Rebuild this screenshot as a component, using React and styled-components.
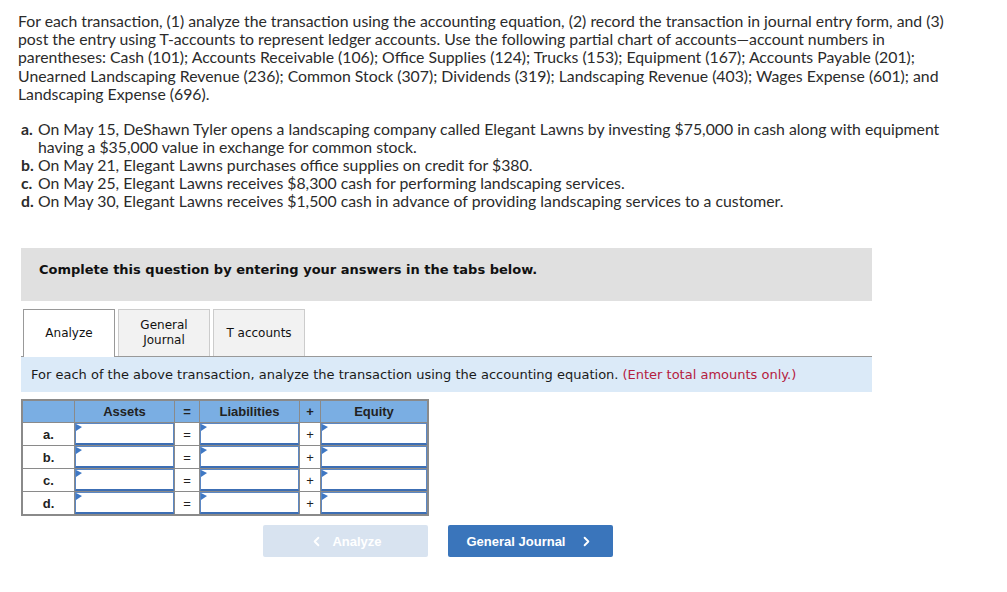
import styled, { createGlobalStyle } from 'styled-components';
import { ChevronLeft, ChevronRight } from 'lucide-react';

const GlobalStyle = createGlobalStyle`
  body {
    margin: 0;
    background: #fff;
  }
`;

const Page = styled.div`
  padding: 12px 18px 30px 18px;
  color: #2b2b2b;
`;

const Intro = styled.p`
  margin: 0;
  max-width: 935px;
  font-family: Lato, 'Open Sans', sans-serif;
  font-size: 15.8px;
  line-height: 18.2px;
`;

const Items = styled.div`
  margin: 17px 0 0 3px;
  display: flex;
  flex-direction: column;
  font-family: Lato, 'Open Sans', sans-serif;
  font-size: 15.8px;
  line-height: 18px;
`;

const Item = styled.div`
  display: grid;
  grid-template-columns: 17px 1fr;
  max-width: 940px;
`;

const Letter = styled.b`
  font-weight: 700;
`;

const Panel = styled.div`
  margin: 38px 0 0 3px;
  width: 851px;
  font-family: 'DejaVu Sans', Verdana, sans-serif;
`;

const Notice = styled.div`
  height: 53px;
  box-sizing: border-box;
  background: #e0e0e0;
  padding: 14px 0 0 18px;
  font-size: 13px;
  line-height: 16px;
  font-weight: 700;
  color: #111;
`;

const TabRow = styled.div`
  margin-top: 8px;
  display: flex;
  gap: 3px;
  padding-left: 2px;
  border-bottom: 1px solid #999;
`;

const Tab = styled.div`
  width: 92px;
  box-sizing: border-box;
  display: flex;
  align-items: center;
  justify-content: center;
  text-align: center;
  font-size: 12px;
  line-height: 15px;
  color: #111;
  background: ${({ active }) => (active ? '#fff' : '#f2f2f2')};
  border: 1px solid ${({ active }) => (active ? '#999' : '#ccc')};
  border-bottom: none;
  margin-bottom: ${({ active }) => (active ? '-1px' : '0')};
  height: ${({ active }) => (active ? '48px' : '47px')};
`;

const Info = styled.div`
  height: 35px;
  background: #dbeaf8;
  display: flex;
  align-items: center;
  padding-left: 10px;
  font-size: 13px;
  color: #1a1a1a;
  white-space: nowrap;
`;

const Hint = styled.span`
  color: #b5203f;
  margin-left: 4px;
`;

const Table = styled.table`
  margin-top: 7px;
  border-collapse: collapse;
  border: 2px solid #8a8a8a;
  font-family: 'Liberation Sans', Arial, sans-serif;
  font-size: 13px;
  font-weight: 700;
  color: #222;
`;

const Head = styled.th`
  height: 21px;
  padding: 0;
  background: #7aaee3;
  border: 1px solid #8a8a8a;
  width: ${({ w }) => w}px;
  font-weight: 700;
  text-align: center;
`;

const Cell = styled.td`
  height: 22px;
  padding: 0;
  border: 1px solid #8a8a8a;
  text-align: center;
  font-weight: ${({ light }) => (light ? 400 : 700)};
  position: relative;
`;

const Field = styled.input`
  display: block;
  width: 100%;
  height: 22px;
  box-sizing: border-box;
  margin: 0;
  border: 1px solid #5b87c4;
  border-bottom: 2px solid #3c6eb4;
  background: #fff;
  outline: none;
`;

const Flag = styled.span`
  position: absolute;
  top: 1px;
  left: 1px;
  width: 0;
  height: 0;
  border-left: 6px solid #3f78c4;
  border-top: 3px solid transparent;
  border-bottom: 4px solid transparent;
`;

const Nav = styled.div`
  margin-top: 9px;
  padding-left: 242px;
  display: flex;
  gap: 20px;
`;

const NavButton = styled.button`
  width: 165px;
  height: 32px;
  border: none;
  border-radius: 2px;
  display: flex;
  align-items: center;
  justify-content: center;
  gap: ${({ back }) => (back ? '8px' : '14px')};
  background: ${({ disabled }) => (disabled ? '#d8e3f0' : '#3a75bb')};
  color: #fff;
  font-family: 'Liberation Sans', Arial, sans-serif;
  font-size: 13px;
  font-weight: 700;
  cursor: ${({ disabled }) => (disabled ? 'default' : 'pointer')};
`;

const rows = ['a.', 'b.', 'c.', 'd.'];

const InputCell = () => (
  <Cell>
    <Field type="text" />
    <Flag />
  </Cell>
);

const App = () => (
  <Page>
    <GlobalStyle />
    <Intro>
      For each transaction, (1) analyze the transaction using the accounting equation, (2) record the transaction in journal entry form, and (3) post the entry using T-accounts to represent ledger accounts. Use the following partial chart of accounts—account numbers in parentheses: Cash (101); Accounts Receivable (106); Office Supplies (124); Trucks (153); Equipment (167); Accounts Payable (201); Unearned Landscaping Revenue (236); Common Stock (307); Dividends (319); Landscaping Revenue (403); Wages Expense (601); and Landscaping Expense (696).
    </Intro>
    <Items>
      <Item>
        <Letter>a.</Letter>
        <span>On May 15, DeShawn Tyler opens a landscaping company called Elegant Lawns by investing $75,000 in cash along with equipment having a $35,000 value in exchange for common stock.</span>
      </Item>
      <Item>
        <Letter>b.</Letter>
        <span>On May 21, Elegant Lawns purchases office supplies on credit for $380.</span>
      </Item>
      <Item>
        <Letter>c.</Letter>
        <span>On May 25, Elegant Lawns receives $8,300 cash for performing landscaping services.</span>
      </Item>
      <Item>
        <Letter>d.</Letter>
        <span>On May 30, Elegant Lawns receives $1,500 cash in advance of providing landscaping services to a customer.</span>
      </Item>
    </Items>

    <Panel>
      <Notice>Complete this question by entering your answers in the tabs below.</Notice>
      <TabRow>
        <Tab active>Analyze</Tab>
        <Tab>General<br />Journal</Tab>
        <Tab>T accounts</Tab>
      </TabRow>
      <Info>
        For each of the above transaction, analyze the transaction using the accounting equation.
        <Hint>(Enter total amounts only.)</Hint>
      </Info>
      <Table>
        <thead>
          <tr>
            <Head w={51} />
            <Head w={99}>Assets</Head>
            <Head w={24}>=</Head>
            <Head w={99}>Liabilities</Head>
            <Head w={20}>+</Head>
            <Head w={106}>Equity</Head>
          </tr>
        </thead>
        <tbody>
          {rows.map((r) => (
            <tr key={r}>
              <Cell>{r}</Cell>
              <InputCell />
              <Cell light>=</Cell>
              <InputCell />
              <Cell light>+</Cell>
              <InputCell />
            </tr>
          ))}
        </tbody>
      </Table>
      <Nav>
        <NavButton disabled back>
          <ChevronLeft size={15} strokeWidth={3} />
          Analyze
        </NavButton>
        <NavButton>
          General Journal
          <ChevronRight size={15} strokeWidth={3} />
        </NavButton>
      </Nav>
    </Panel>
  </Page>
);

export default App;
